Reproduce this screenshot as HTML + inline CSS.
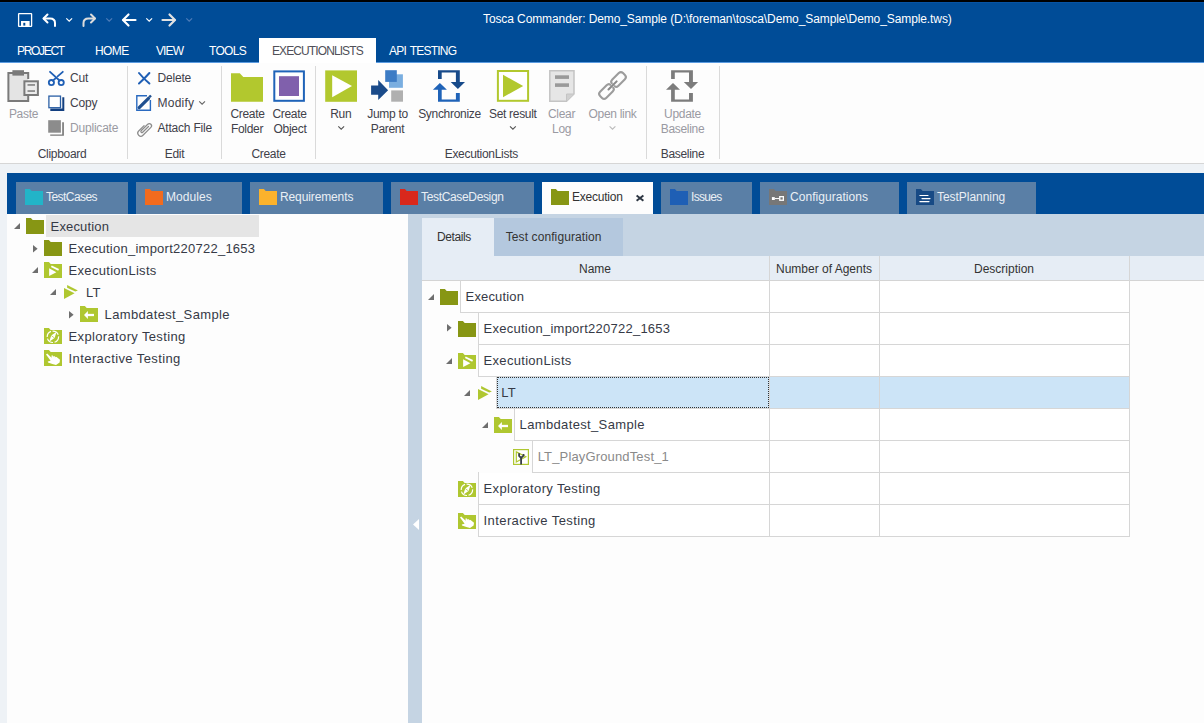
<!DOCTYPE html>
<html><head><meta charset="utf-8">
<style>
*{margin:0;padding:0;box-sizing:border-box}
html,body{width:1204px;height:723px;overflow:hidden;background:#fdfdfd;font-family:"Liberation Sans",sans-serif;color:#333}
.a{position:absolute}
.t{position:absolute;white-space:nowrap;line-height:1}
svg{position:absolute;overflow:visible}
</style></head><body>


<!-- top black strip + title bar -->
<div class="a" style="left:0;top:0;width:1204px;height:2px;background:#000"></div>
<div class="a" style="left:0;top:2px;width:1204px;height:60px;background:#004c97"></div>
<div class="a" style="left:0;top:2px;width:1204px;height:1px;background:#0753a3"></div>
<div class="a" style="left:0;top:62px;width:1204px;height:1px;background:#5b9be0"></div>
<div class="t" style="left:483px;top:12.5px;font-size:12px;color:#fff;letter-spacing:-0.1px">Tosca Commander: Demo_Sample (D:\foreman\tosca\Demo_Sample\Demo_Sample.tws)</div>


<!-- quick access toolbar -->
<svg style="left:0;top:0" width="200" height="40">
 <g fill="none" stroke="#fff" stroke-width="1.3">
  <rect x="18.6" y="13.6" width="13" height="12.8" rx="0.5"/>
 </g>
 <rect x="21" y="21" width="8.6" height="5.6" fill="#fff"/>
 <rect x="23.3" y="22.8" width="2" height="2.8" fill="#004c97"/>
 <!-- undo -->
 <g fill="none" stroke="#fff" stroke-width="2" stroke-linecap="round" stroke-linejoin="round">
  <path d="M47.5 14.5 L43.5 18.5 L47.5 22.5"/>
  <path d="M43.8 18.5 H50 Q55 18.5 55 23 V26"/>
 </g>
 <path d="M66.3 18.3 L69.2 21.2 L72.1 18.3" fill="none" stroke="#fff" stroke-width="1.2"/>
 <!-- redo -->
 <g fill="none" stroke="#dcdcdc" stroke-width="2" stroke-linecap="round" stroke-linejoin="round">
  <path d="M91 14.5 L95 18.5 L91 22.5"/>
  <path d="M94.7 18.5 H88.5 Q83.5 18.5 83.5 23 V26"/>
 </g>
 <path d="M106.3 18.3 L109.2 21.2 L112.1 18.3" fill="none" stroke="#4e7cb8" stroke-width="1.2"/>
 <!-- back -->
 <g fill="none" stroke="#fff" stroke-width="2.2" stroke-linecap="round" stroke-linejoin="round">
  <path d="M128.5 14.5 L123 20 L128.5 25.5"/>
  <path d="M123.5 20 H135.5"/>
 </g>
 <path d="M146.3 18.3 L149.2 21.2 L152.1 18.3" fill="none" stroke="#fff" stroke-width="1.2"/>
 <!-- forward -->
 <g fill="none" stroke="#e2e2e2" stroke-width="2.2" stroke-linecap="round" stroke-linejoin="round">
  <path d="M169.5 14.5 L175 20 L169.5 25.5"/>
  <path d="M174.5 20 H162.5"/>
 </g>
 <path d="M186.3 18.3 L189.2 21.2 L192.1 18.3" fill="none" stroke="#4e7cb8" stroke-width="1.2"/>
</svg>

<!-- menu tabs -->
<div class="a" style="left:259px;top:38px;width:117px;height:26px;background:#fff"></div>
<div class="t" style="left:17px;top:45px;font-size:12px;color:#fff;letter-spacing:-1.3px">PROJECT</div>
<div class="t" style="left:95px;top:45px;font-size:12px;color:#fff;letter-spacing:-0.6px">HOME</div>
<div class="t" style="left:156px;top:45px;font-size:12px;color:#fff;letter-spacing:-0.9px">VIEW</div>
<div class="t" style="left:209px;top:45px;font-size:12px;color:#fff;letter-spacing:-0.7px">TOOLS</div>
<div class="t" style="left:272px;top:45px;font-size:12px;color:#505058;letter-spacing:-0.9px">EXECUTIONLISTS</div>
<div class="t" style="left:389px;top:45px;font-size:12px;color:#fff;letter-spacing:-0.8px;word-spacing:1.5px">API TESTING</div>

<!-- ribbon -->
<div class="a" style="left:0;top:63px;width:1204px;height:100px;background:#fdfdfd"></div>
<div class="a" style="left:0;top:163px;width:1204px;height:1px;background:#d6d6d6"></div>
<div class="a" style="left:0;top:164px;width:1204px;height:9px;background:#eef2f6"></div>

<!-- ribbon content -->
<div class="a" style="left:127px;top:66px;width:1px;height:93px;background:#dadada"></div>
<div class="a" style="left:221px;top:66px;width:1px;height:93px;background:#dadada"></div>
<div class="a" style="left:315px;top:66px;width:1px;height:93px;background:#dadada"></div>
<div class="a" style="left:646px;top:66px;width:1px;height:93px;background:#dadada"></div>
<div class="a" style="left:719px;top:66px;width:1px;height:93px;background:#dadada"></div>
<div class="t" style="left:-36.5px;width:120px;text-align:center;top:107.8px;font-size:12px;color:#9a9aa2;letter-spacing:-0.3px">Paste</div>
<div class="t" style="left:70px;top:72.0px;font-size:12px;color:#41414a;letter-spacing:-0.2px">Cut</div>
<div class="t" style="left:70px;top:96.8px;font-size:12px;color:#41414a;letter-spacing:-0.2px">Copy</div>
<div class="t" style="left:70px;top:121.8px;font-size:12px;color:#9a9aa2;letter-spacing:-0.2px">Duplicate</div>
<div class="t" style="left:2px;width:120px;text-align:center;top:147.5px;font-size:12px;color:#41414a;letter-spacing:-0.3px">Clipboard</div>
<div class="t" style="left:157.5px;top:72.0px;font-size:12px;color:#41414a;letter-spacing:-0.2px">Delete</div>
<div class="t" style="left:157.5px;top:96.8px;font-size:12px;color:#41414a;letter-spacing:0.25px">Modify</div>
<div class="t" style="left:157.5px;top:121.8px;font-size:12px;color:#41414a;letter-spacing:-0.2px">Attach File</div>
<div class="t" style="left:114.5px;width:120px;text-align:center;top:147.5px;font-size:12px;color:#41414a;letter-spacing:-0.3px">Edit</div>
<div class="t" style="left:187.5px;width:120px;text-align:center;top:107.8px;font-size:12px;color:#41414a;letter-spacing:-0.3px">Create</div>
<div class="t" style="left:187px;width:120px;text-align:center;top:122.8px;font-size:12px;color:#41414a;letter-spacing:-0.3px">Folder</div>
<div class="t" style="left:229.5px;width:120px;text-align:center;top:107.8px;font-size:12px;color:#41414a;letter-spacing:-0.3px">Create</div>
<div class="t" style="left:230px;width:120px;text-align:center;top:122.8px;font-size:12px;color:#41414a;letter-spacing:-0.3px">Object</div>
<div class="t" style="left:208.5px;width:120px;text-align:center;top:147.5px;font-size:12px;color:#41414a;letter-spacing:-0.3px">Create</div>
<div class="t" style="left:280.8px;width:120px;text-align:center;top:107.8px;font-size:12px;color:#41414a;letter-spacing:-0.3px">Run</div>
<div class="t" style="left:327.5px;width:120px;text-align:center;top:107.8px;font-size:12px;color:#41414a;letter-spacing:-0.3px">Jump to</div>
<div class="t" style="left:327.5px;width:120px;text-align:center;top:122.8px;font-size:12px;color:#41414a;letter-spacing:-0.3px">Parent</div>
<div class="t" style="left:389.5px;width:120px;text-align:center;top:107.8px;font-size:12px;color:#41414a;letter-spacing:-0.3px">Synchronize</div>
<div class="t" style="left:452.79999999999995px;width:120px;text-align:center;top:107.8px;font-size:12px;color:#41414a;letter-spacing:-0.3px">Set result</div>
<div class="t" style="left:501.6px;width:120px;text-align:center;top:107.8px;font-size:12px;color:#9a9aa2;letter-spacing:-0.3px">Clear</div>
<div class="t" style="left:501.6px;width:120px;text-align:center;top:122.8px;font-size:12px;color:#9a9aa2;letter-spacing:-0.3px">Log</div>
<div class="t" style="left:552.5px;width:120px;text-align:center;top:107.8px;font-size:12px;color:#9a9aa2;letter-spacing:-0.3px">Open link</div>
<div class="t" style="left:421.3px;width:120px;text-align:center;top:147.5px;font-size:12px;color:#41414a;letter-spacing:-0.3px">ExecutionLists</div>
<div class="t" style="left:622.5px;width:120px;text-align:center;top:107.8px;font-size:12px;color:#9a9aa2;letter-spacing:-0.3px">Update</div>
<div class="t" style="left:622.5px;width:120px;text-align:center;top:122.8px;font-size:12px;color:#9a9aa2;letter-spacing:-0.3px">Baseline</div>
<div class="t" style="left:622.5px;width:120px;text-align:center;top:147.5px;font-size:12px;color:#41414a;letter-spacing:-0.3px">Baseline</div>
<svg style="left:0;top:0" width="740" height="165">
 <!-- paste -->
 <rect x="8.4" y="73" width="19.8" height="28" fill="#e4e4e4"/>
 <path d="M28.2 79 V73 H8.4 V101 H28.2 V95.5" fill="none" stroke="#7a7a7a" stroke-width="2"/>
 <rect x="12.4" y="70.2" width="11.6" height="5.4" fill="#7a7a7a"/>
 <rect x="24.4" y="81.3" width="13.5" height="13.7" fill="#ececec" stroke="#7a7a7a" stroke-width="2"/>
 <rect x="27.5" y="84.2" width="7.5" height="1.5" fill="#7a7a7a"/>
 <rect x="27.5" y="90.3" width="7.5" height="1.5" fill="#7a7a7a"/>
 <!-- cut -->
 <g fill="none" stroke="#1f5fb5" stroke-width="1.8" stroke-linecap="round">
  <path d="M50 71.8 L59.5 80.5"/>
  <path d="M62.8 71.8 L57.6 76.4"/>
  <path d="M56 78 L52.8 80.6"/>
  <circle cx="51.4" cy="82.6" r="2.6"/>
  <circle cx="61.2" cy="82.6" r="2.6"/>
 </g>
 <!-- copy -->
 <path d="M62.3 97.3 H64.3 V110.9 H50.3 V108.6 H62.3 Z" fill="#123f80"/>
 <rect x="48.9" y="96.1" width="11.6" height="11.6" fill="#fff" stroke="#2a5fa5" stroke-width="1.3"/>
 <!-- duplicate -->
 <path d="M62.2 122.2 H63.9 V135.8 H50.2 V134.4 H62.2 Z" fill="#7a7a7a"/>
 <rect x="48.2" y="120.2" width="12.7" height="12.5" fill="#8c8c8c"/>
 <!-- delete -->
 <g fill="none" stroke="#1f5fb5" stroke-width="2" stroke-linecap="round">
  <path d="M139 73 Q143 78 149.4 83.5"/>
  <path d="M149.4 73 Q145 78 139 83.5"/>
 </g>
 <!-- modify -->
 <path d="M147 95.8 H136.8 V110.2 H150.4 V100" fill="none" stroke="#2a6ac0" stroke-width="1.4"/>
 <path d="M139.2 107.6 L148.5 98.3" stroke="#1f4f8f" stroke-width="3.2" stroke-linecap="round"/>
 <path d="M149.3 97.2 L151 95.5" stroke="#1f4f8f" stroke-width="2.4"/>
 <!-- attach -->
 <g transform="translate(144.6 129) rotate(-45) scale(0.82)" fill="none" stroke="#8c8c8c" stroke-width="1.5" stroke-linecap="round">
  <path d="M5.5 1.2 H-4.5 A1.3 1.3 0 0 1 -4.5 -1.4 H6.8 A2.7 2.7 0 0 1 6.8 4 H-6.8 A3.7 3.7 0 0 1 -6.8 -3.4 H2.5"/>
 </g>
 <!-- create folder -->
 <path d="M231 73.2 H239.8 L243.3 77 H263 V101.8 H231 Z" fill="#b2c82e"/>
 <!-- create object -->
 <rect x="274.3" y="71.4" width="29.6" height="29.4" fill="#fff" stroke="#1f63b8" stroke-width="2"/>
 <rect x="279" y="76.2" width="20" height="19.8" fill="#8060ac"/>
 <!-- run -->
 <rect x="325.2" y="70.4" width="31.8" height="31.4" fill="#b2c82e"/>
 <path d="M332.2 75.3 L352 86.1 L332.2 97.2 Z" fill="#fff"/>
 <!-- jump to parent -->
 <rect x="389" y="74.3" width="13.9" height="13.5" fill="#7aaee0"/>
 <rect x="385.2" y="70.2" width="11.6" height="11.7" fill="#3d7cc5"/>
 <rect x="391.2" y="90.4" width="11.8" height="11.3" fill="#b0b0b0"/>
 <path d="M371.1 85.6 H378.2 V80 L388.1 90.2 L378.2 100 V94.8 H371.1 Z" fill="#1a4b8a"/>
 <!-- synchronize -->
 <path d="M438 70.2 H459.8 V82 H465 L457.9 89 L450.7 82 H455.9 V72.4 H441.7 V79 H438 Z" fill="#174a8a"/>
 <path d="M438 89.8 H432.9 L439.9 82.9 L446.9 89.8 H441.7 V99.5 H455.9 V93.1 H459.8 V101.7 H438 Z" fill="#1f63b8"/>
 <!-- set result -->
 <rect x="497.9" y="71" width="30.2" height="29.8" fill="#fff" stroke="#b2c82e" stroke-width="2"/>
 <path d="M503 74.8 L523.2 85.9 L503 97.2 Z" fill="#b2c82e"/>
 <!-- clear log -->
 <path d="M549.8 70.8 H574 V94 L566.5 101.2 H549.8 Z" fill="#e6e6e6" stroke="#c4c4c4" stroke-width="1.5"/>
 <path d="M574 94 H566.5 V101.2" fill="#d0d0d0" stroke="#c4c4c4" stroke-width="1"/>
 <rect x="555" y="75.3" width="14" height="3.6" fill="#9a9a9a"/>
 <rect x="555" y="83.3" width="14" height="3.6" fill="#9a9a9a"/>
 <!-- open link -->
 <g transform="translate(612.5 85.5) rotate(-45) scale(0.9)" fill="none" stroke="#9c9c9c" stroke-width="2.3" stroke-linecap="round">
  <path d="M1.2 -2.3 Q1.2 -4.8 4.5 -4.8 H14.7 Q18 -4.8 18 -1.5 V1.5 Q18 4.8 14.7 4.8 H4.5 Q1.2 4.8 1.2 2.3"/>
  <path d="M-1.2 2.3 Q-1.2 4.8 -4.5 4.8 H-14.7 Q-18 4.8 -18 1.5 V-1.5 Q-18 -4.8 -14.7 -4.8 H-4.5 Q-1.2 -4.8 -1.2 -2.3"/>
  <path d="M-6.3 0 H6.5" stroke="#8a8a8a"/>
 </g>
 <!-- update baseline -->
 <g fill="#7c7c7c">
  <path d="M671.1 70.2 H692.9 V82 H698.1 L691 89 L683.8 82 H689 V72.4 H674.8 V79 H671.1 Z"/>
  <path d="M671.1 89.8 H666 L673 82.9 L680 89.8 H674.8 V99.5 H689 V93.1 H692.9 V101.7 H671.1 Z"/>
 </g>
 <!-- chevrons -->
 <g fill="none" stroke-width="1.1">
  <path d="M338.3 126.3 L341.2 129.2 L344.1 126.3" stroke="#555"/>
  <path d="M510 126.3 L512.9 129.2 L515.8 126.3" stroke="#555"/>
  <path d="M609.6 126.3 L612.5 129.2 L615.4 126.3" stroke="#bbb"/>
  <path d="M199.2 101.3 L202.1 104.2 L205 101.3" stroke="#666"/>
 </g>
</svg>

<!-- doc tab strip -->
<div class="a" style="left:0;top:164px;width:7px;height:559px;background:#eef2f6"></div>
<div class="a" style="left:7px;top:173px;width:1197px;height:41px;background:#004c97"></div>

<!-- doc tabs -->
<div class="a" style="left:16px;top:182px;width:112px;height:32px;background:#5a7fa6"></div>
<svg style="left:25px;top:189px" width="18" height="16" viewBox="0 0 18 16"><path d="M0 0 H4.9 L6.7 2 H18 V16 H0 Z" fill="#22b4c8"/></svg>
<div class="t" style="left:46px;top:190.6px;font-size:12px;color:#eaeff5;letter-spacing:-0.55px">TestCases</div>
<div class="a" style="left:136px;top:182px;width:106px;height:32px;background:#5a7fa6"></div>
<svg style="left:145px;top:189px" width="18" height="16" viewBox="0 0 18 16"><path d="M0 0 H4.9 L6.7 2 H18 V16 H0 Z" fill="#f26b1f"/></svg>
<div class="t" style="left:166px;top:190.6px;font-size:12px;color:#eaeff5;letter-spacing:0.05px">Modules</div>
<div class="a" style="left:250px;top:182px;width:133px;height:32px;background:#5a7fa6"></div>
<svg style="left:259px;top:189px" width="18" height="16" viewBox="0 0 18 16"><path d="M0 0 H4.9 L6.7 2 H18 V16 H0 Z" fill="#fbb22c"/></svg>
<div class="t" style="left:280px;top:190.6px;font-size:12px;color:#eaeff5;letter-spacing:-0.12px">Requirements</div>
<div class="a" style="left:391px;top:182px;width:143px;height:32px;background:#5a7fa6"></div>
<svg style="left:400px;top:189px" width="18" height="16" viewBox="0 0 18 16"><path d="M0 0 H4.9 L6.7 2 H18 V16 H0 Z" fill="#d9281c"/></svg>
<div class="t" style="left:421px;top:190.6px;font-size:12px;color:#eaeff5;letter-spacing:-0.34px">TestCaseDesign</div>
<div class="a" style="left:542px;top:182px;width:111px;height:32px;background:#fdfdfd"></div>
<svg style="left:551px;top:189px" width="18" height="16" viewBox="0 0 18 16"><path d="M0 0 H4.9 L6.7 2 H18 V16 H0 Z" fill="#879614"/></svg>
<div class="t" style="left:572px;top:190.6px;font-size:12px;color:#333;letter-spacing:-0.23px">Execution</div>
<div class="a" style="left:661px;top:182px;width:91px;height:32px;background:#5a7fa6"></div>
<svg style="left:670px;top:189px" width="18" height="16" viewBox="0 0 18 16"><path d="M0 0 H4.9 L6.7 2 H18 V16 H0 Z" fill="#1f5fb5"/></svg>
<div class="t" style="left:691px;top:190.6px;font-size:12px;color:#eaeff5;letter-spacing:-0.67px">Issues</div>
<div class="a" style="left:760px;top:182px;width:139px;height:32px;background:#5a7fa6"></div>
<svg style="left:769px;top:189px" width="18" height="16" viewBox="0 0 18 16"><path d="M0 0 H4.9 L6.7 2 H18 V16 H0 Z" fill="#777"/><rect x="2.9" y="8.1" width="2.9" height="2.9" fill="#fff"/><path d="M5.8 9.55 H10.2" stroke="#fff" stroke-width="1"/><rect x="10.75" y="7.65" width="3.6" height="3.6" fill="none" stroke="#fff" stroke-width="1.3"/></svg>
<div class="t" style="left:790px;top:190.6px;font-size:12px;color:#eaeff5;letter-spacing:0.04px">Configurations</div>
<div class="a" style="left:907px;top:182px;width:129px;height:32px;background:#5a7fa6"></div>
<svg style="left:916px;top:189px" width="18" height="16" viewBox="0 0 18 16"><path d="M0 0 H4.9 L6.7 2 H18 V16 H0 Z" fill="#174a85"/><path d="M3.9 6.5 H12 M6 9.6 H14 M3.9 12.6 H13" stroke="#fff" stroke-width="1.2" stroke-linecap="round"/></svg>
<div class="t" style="left:937px;top:190.6px;font-size:12px;color:#eaeff5;letter-spacing:-0.04px">TestPlanning</div>
<svg style="left:0;top:0" width="700" height="220"><path d="M636.6 195.4 L643.4 200.8 M643.4 195.4 L636.6 200.8" stroke="#2d3642" stroke-width="1.9"/></svg>

<!-- left tree panel -->
<div class="a" style="left:7px;top:214px;width:401px;height:509px;background:#fdfdfd"></div>

<!-- splitter -->
<div class="a" style="left:408px;top:214px;width:14px;height:509px;background:#c5d4e3"></div>

<!-- right panel -->
<div class="a" style="left:422px;top:214px;width:782px;height:42px;background:#c5d4e3"></div>
<div class="a" style="left:422px;top:218px;width:72px;height:38px;background:#e6edf5"></div>
<div class="a" style="left:494px;top:218px;width:129px;height:38px;background:#b4c8de"></div>
<div class="a" style="left:422px;top:256px;width:782px;height:24px;background:#e6edf5"></div>
<div class="a" style="left:422px;top:280px;width:782px;height:1px;background:#d4d4d4"></div>

<!-- left tree -->
<div class="a" style="left:46px;top:215px;width:213px;height:22px;background:#e5e5e5"></div>
<svg style="left:13.9px;top:223.3px" width="6" height="6" viewBox="0 0 6 6"><path d="M6 0 V6 H0 Z" fill="#6e6e6e"/></svg>
<svg style="left:26px;top:218px" width="18" height="16" viewBox="0 0 18 16"><path d="M0 0 H4.9 L6.7 2 H18 V16 H0 Z" fill="#879614"/></svg>
<div class="t" style="left:50.6px;top:220.1px;font-size:13px;color:#363a46;letter-spacing:0.15px">Execution</div>
<svg style="left:33.0px;top:244.5px" width="5" height="8" viewBox="0 0 5 8"><path d="M0 0 L4.6 3.7 L0 7.4 Z" fill="#6e6e6e"/></svg>
<svg style="left:44px;top:240px" width="18" height="16" viewBox="0 0 18 16"><path d="M0 0 H4.9 L6.7 2 H18 V16 H0 Z" fill="#879614"/></svg>
<div class="t" style="left:68.6px;top:242.1px;font-size:13px;color:#363a46;letter-spacing:0.25px">Execution_import220722_1653</div>
<svg style="left:31.9px;top:267.3px" width="6" height="6" viewBox="0 0 6 6"><path d="M6 0 V6 H0 Z" fill="#6e6e6e"/></svg>
<svg style="left:44px;top:262px" width="18" height="16" viewBox="0 0 18 16"><path d="M0 0 H4.9 L6.7 2 H18 V16 H0 Z" fill="#afc730"/>
   <path d="M5.1 6.3 L12.4 10.3 L5.1 14 Z" fill="#fff"/><path d="M7.3 4.2 L14.6 7.9" stroke="#fff" stroke-width="1.8"/></svg>
<div class="t" style="left:68.6px;top:264.1px;font-size:13px;color:#363a46;letter-spacing:0.3px">ExecutionLists</div>
<svg style="left:49.9px;top:289.3px" width="6" height="6" viewBox="0 0 6 6"><path d="M6 0 V6 H0 Z" fill="#6e6e6e"/></svg>
<svg style="left:64px;top:285px" width="14" height="14" viewBox="0 0 14 14"><path d="M0 3 L10.6 8.3 L0 13.9 Z" fill="#afc730"/><path d="M3.1 0 V2.8 L11.2 6.6 L13.9 5.4 Z" fill="#afc730"/></svg>
<div class="t" style="left:86px;top:286.1px;font-size:13px;color:#363a46;letter-spacing:0.15px">LT</div>
<svg style="left:69.0px;top:310.5px" width="5" height="8" viewBox="0 0 5 8"><path d="M0 0 L4.6 3.7 L0 7.4 Z" fill="#6e6e6e"/></svg>
<svg style="left:80px;top:306px" width="18" height="16" viewBox="0 0 18 16"><path d="M0 0 H4.9 L6.7 2 H18 V16 H0 Z" fill="#afc730"/>
   <path d="M4 9 L7.9 4.9 V13.1 Z" fill="#fff"/><path d="M7 9 H14" stroke="#fff" stroke-width="2.3"/></svg>
<div class="t" style="left:104.6px;top:308.1px;font-size:13px;color:#363a46;letter-spacing:0.35px">Lambdatest_Sample</div>
<svg style="left:44px;top:328px" width="18" height="16" viewBox="0 0 18 16"><path d="M0 0 H4.9 L6.7 2 H18 V16 H0 Z" fill="#afc730"/>
   <circle cx="8.9" cy="8.8" r="5.7" fill="none" stroke="#fff" stroke-width="1.2" stroke-dasharray="7 1.6"/>
   <path d="M12.6 3.8 L10.6 10.1 L5.2 13.8 L7.2 7.5 Z" fill="#fff"/><path d="M7.2 7.5 L10.6 10.1" stroke="#afc730" stroke-width="0.7"/></svg>
<div class="t" style="left:68.6px;top:330.1px;font-size:13px;color:#363a46;letter-spacing:0.35px">Exploratory Testing</div>
<svg style="left:44px;top:350px" width="18" height="16" viewBox="0 0 18 16"><path d="M0 0 H4.9 L6.7 2 H18 V16 H0 Z" fill="#afc730"/>
   <path d="M2 4.4 L3.2 3.6 L7.6 7.8 L7.5 5.6 L8.6 5.3 L9.2 7.2 L9.5 6 L10.6 5.9 L11 7.6 L11.5 6.7 L12.6 6.9 L16 9.8 L15.6 12.4 L12 15 L8.4 14 L4 12.6 L3.8 11.4 L6.6 10.8 Z" fill="#fff"/></svg>
<div class="t" style="left:68.6px;top:352.1px;font-size:13px;color:#363a46;letter-spacing:0.4px">Interactive Testing</div>
<!-- grid -->
<div class="t" style="left:437px;top:231px;font-size:12px;color:#333;letter-spacing:-0.4px">Details</div>
<div class="t" style="left:505.7px;top:231px;font-size:12px;color:#333;letter-spacing:0.1px">Test configuration</div>
<div class="t" style="left:495px;width:200px;text-align:center;top:262.8px;font-size:12px;color:#333">Name</div>
<div class="t" style="left:724px;width:200px;text-align:center;top:262.8px;font-size:12px;color:#333">Number of Agents</div>
<div class="t" style="left:904px;width:200px;text-align:center;top:262.8px;font-size:12px;color:#333">Description</div>
<div class="a" style="left:1129px;top:281px;width:75px;height:442px;background:#fdfdfd"></div>
<div class="a" style="left:460px;top:281px;width:669px;height:31px;background:#fff"></div>
<div class="a" style="left:460px;top:312px;width:670px;height:1px;background:#d6d6d6"></div>
<div class="a" style="left:460px;top:280px;width:1px;height:33px;background:#d6d6d6"></div>
<svg style="left:427.7px;top:294px" width="6" height="6" viewBox="0 0 6 6"><path d="M6 0 V6 H0 Z" fill="#6e6e6e"/></svg>
<svg style="left:440px;top:289px" width="18" height="16" viewBox="0 0 18 16"><path d="M0 0 H4.9 L6.7 2 H18 V16 H0 Z" fill="#879614"/></svg>
<div class="t" style="left:465.6px;top:289.8px;font-size:13px;color:#363a46;letter-spacing:0.15px">Execution</div>
<div class="a" style="left:478px;top:313px;width:651px;height:31px;background:#fff"></div>
<div class="a" style="left:478px;top:344px;width:652px;height:1px;background:#d6d6d6"></div>
<div class="a" style="left:478px;top:312px;width:1px;height:33px;background:#d6d6d6"></div>
<svg style="left:447.0px;top:324.4px" width="5" height="8" viewBox="0 0 5 8"><path d="M0 0 L4.6 3.7 L0 7.4 Z" fill="#6e6e6e"/></svg>
<svg style="left:458px;top:321px" width="18" height="16" viewBox="0 0 18 16"><path d="M0 0 H4.9 L6.7 2 H18 V16 H0 Z" fill="#879614"/></svg>
<div class="t" style="left:483.6px;top:321.8px;font-size:13px;color:#363a46;letter-spacing:0.25px">Execution_import220722_1653</div>
<div class="a" style="left:478px;top:345px;width:651px;height:31px;background:#fff"></div>
<div class="a" style="left:478px;top:376px;width:652px;height:1px;background:#d6d6d6"></div>
<div class="a" style="left:478px;top:344px;width:1px;height:33px;background:#d6d6d6"></div>
<svg style="left:445.7px;top:358px" width="6" height="6" viewBox="0 0 6 6"><path d="M6 0 V6 H0 Z" fill="#6e6e6e"/></svg>
<svg style="left:458px;top:353px" width="18" height="16" viewBox="0 0 18 16"><path d="M0 0 H4.9 L6.7 2 H18 V16 H0 Z" fill="#afc730"/>
   <path d="M5.1 6.3 L12.4 10.3 L5.1 14 Z" fill="#fff"/><path d="M7.3 4.2 L14.6 7.9" stroke="#fff" stroke-width="1.8"/></svg>
<div class="t" style="left:483.6px;top:353.8px;font-size:13px;color:#363a46;letter-spacing:0.3px">ExecutionLists</div>
<div class="a" style="left:496px;top:377px;width:633px;height:31px;background:#cce4f7"></div>
<div class="a" style="left:496px;top:408px;width:634px;height:1px;background:#d6d6d6"></div>
<div class="a" style="left:496px;top:376px;width:1px;height:33px;background:#d6d6d6"></div>
<div class="a" style="left:497px;top:377px;width:272px;height:31px;border:1px dotted #333"></div>
<svg style="left:463.7px;top:390px" width="6" height="6" viewBox="0 0 6 6"><path d="M6 0 V6 H0 Z" fill="#6e6e6e"/></svg>
<svg style="left:478px;top:386px" width="14" height="14" viewBox="0 0 14 14"><path d="M0 3 L10.6 8.3 L0 13.9 Z" fill="#afc730"/><path d="M3.1 0 V2.8 L11.2 6.6 L13.9 5.4 Z" fill="#afc730"/></svg>
<div class="t" style="left:501.3px;top:385.8px;font-size:13px;color:#363a46;letter-spacing:0.15px">LT</div>
<div class="a" style="left:514px;top:409px;width:615px;height:31px;background:#fff"></div>
<div class="a" style="left:514px;top:440px;width:616px;height:1px;background:#d6d6d6"></div>
<div class="a" style="left:514px;top:408px;width:1px;height:33px;background:#d6d6d6"></div>
<svg style="left:481.7px;top:422px" width="6" height="6" viewBox="0 0 6 6"><path d="M6 0 V6 H0 Z" fill="#6e6e6e"/></svg>
<svg style="left:494px;top:417px" width="18" height="16" viewBox="0 0 18 16"><path d="M0 0 H4.9 L6.7 2 H18 V16 H0 Z" fill="#afc730"/>
   <path d="M4 9 L7.9 4.9 V13.1 Z" fill="#fff"/><path d="M7 9 H14" stroke="#fff" stroke-width="2.3"/></svg>
<div class="t" style="left:519.6px;top:417.8px;font-size:13px;color:#363a46;letter-spacing:0.35px">Lambdatest_Sample</div>
<div class="a" style="left:532px;top:441px;width:597px;height:31px;background:#fff"></div>
<div class="a" style="left:532px;top:472px;width:598px;height:1px;background:#d6d6d6"></div>
<div class="a" style="left:532px;top:440px;width:1px;height:33px;background:#d6d6d6"></div>
<svg style="left:513px;top:449px" width="16" height="16" viewBox="0 0 16 16"><rect x="0.6" y="0.6" width="14.8" height="14.8" fill="#fff" stroke="#afc730" stroke-width="1.2"/>
   <path d="M3.3 2.9 L12.8 7.8 L3.3 13 Z" fill="none" stroke="#afc730" stroke-width="1.2"/>
   <path d="M6.1 4.2 V6.9 L8.1 8.9 L10.5 6.7 V5" fill="none" stroke="#3a3f4a" stroke-width="1.8"/>
   <path d="M8.1 8.5 V15.6" stroke="#3a3f4a" stroke-width="1.8"/></svg>
<div class="t" style="left:537.7px;top:449.8px;font-size:13px;color:#8a8a8a;letter-spacing:0.15px">LT_PlayGroundTest_1</div>
<div class="a" style="left:478px;top:473px;width:651px;height:31px;background:#fff"></div>
<div class="a" style="left:478px;top:504px;width:652px;height:1px;background:#d6d6d6"></div>
<div class="a" style="left:478px;top:472px;width:1px;height:33px;background:#d6d6d6"></div>
<svg style="left:458px;top:481px" width="18" height="16" viewBox="0 0 18 16"><path d="M0 0 H4.9 L6.7 2 H18 V16 H0 Z" fill="#afc730"/>
   <circle cx="8.9" cy="8.8" r="5.7" fill="none" stroke="#fff" stroke-width="1.2" stroke-dasharray="7 1.6"/>
   <path d="M12.6 3.8 L10.6 10.1 L5.2 13.8 L7.2 7.5 Z" fill="#fff"/><path d="M7.2 7.5 L10.6 10.1" stroke="#afc730" stroke-width="0.7"/></svg>
<div class="t" style="left:483.6px;top:481.8px;font-size:13px;color:#363a46;letter-spacing:0.35px">Exploratory Testing</div>
<div class="a" style="left:478px;top:505px;width:651px;height:31px;background:#fff"></div>
<div class="a" style="left:478px;top:536px;width:652px;height:1px;background:#d6d6d6"></div>
<div class="a" style="left:478px;top:504px;width:1px;height:33px;background:#d6d6d6"></div>
<svg style="left:458px;top:513px" width="18" height="16" viewBox="0 0 18 16"><path d="M0 0 H4.9 L6.7 2 H18 V16 H0 Z" fill="#afc730"/>
   <path d="M2 4.4 L3.2 3.6 L7.6 7.8 L7.5 5.6 L8.6 5.3 L9.2 7.2 L9.5 6 L10.6 5.9 L11 7.6 L11.5 6.7 L12.6 6.9 L16 9.8 L15.6 12.4 L12 15 L8.4 14 L4 12.6 L3.8 11.4 L6.6 10.8 Z" fill="#fff"/></svg>
<div class="t" style="left:483.6px;top:513.8px;font-size:13px;color:#363a46;letter-spacing:0.4px">Interactive Testing</div>
<div class="a" style="left:769px;top:256px;width:1px;height:281px;background:#d6d6d6"></div>
<div class="a" style="left:879px;top:256px;width:1px;height:281px;background:#d6d6d6"></div>
<div class="a" style="left:1129px;top:256px;width:1px;height:281px;background:#d6d6d6"></div>
<svg style="left:408px;top:514px" width="14" height="20"><path d="M11 5 L5 10.5 L11 16 Z" fill="#fff"/></svg>
</body></html>
